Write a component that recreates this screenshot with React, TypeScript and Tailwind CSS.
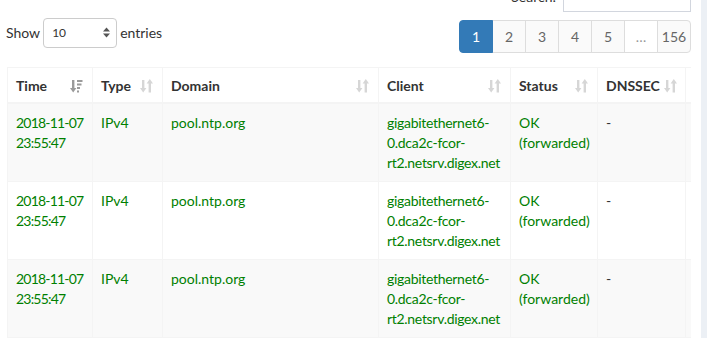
import { ReactNode } from 'react'

type Row = {
  date: string
  time: string
  type: string
  domain: string
  client: string[]
  status: string[]
  dnssec: string
}

const rows: Row[] = [1, 2, 3].map(() => ({
  date: '2018-11-07',
  time: '23:55:47',
  type: 'IPv4',
  domain: 'pool.ntp.org',
  client: ['gigabitethernet6-', '0.dca2c-fcor-', 'rt2.netsrv.digex.net'],
  status: ['OK', '(forwarded)'],
  dnssec: '-',
}))

const pages = ['1', '2', '3', '4', '5', '…', '156']

function SortBoth() {
  return (
    <svg width="13" height="14" viewBox="0 0 13 14" className="shrink-0">
      <g fill="#d6d6d6">
        <rect x="2" y="1" width="2.4" height="9" />
        <polygon points="0,9 6.4,9 3.2,13.5" />
        <rect x="8.6" y="4" width="2.4" height="9.5" />
        <polygon points="6.6,4.5 13,4.5 9.8,0" />
      </g>
    </svg>
  )
}

function SortDesc() {
  return (
    <svg width="13" height="14" viewBox="0 0 13 14" className="shrink-0">
      <g fill="#9a9a9a">
        <rect x="2" y="1" width="2.4" height="9" />
        <polygon points="0,9 6.4,9 3.2,13.5" />
        <rect x="7" y="1" width="5.5" height="2" />
        <rect x="7" y="4.5" width="4.5" height="2" />
        <rect x="7" y="8" width="3" height="2" />
        <rect x="7" y="11.5" width="2" height="2" />
      </g>
    </svg>
  )
}

function Th({ children, active, bare }: { children?: ReactNode; active?: boolean; bare?: boolean }) {
  return (
    <th className="border border-[#f4f4f4] border-b-2 pl-2 pr-[9px] pt-2 pb-[6px] text-left align-bottom font-bold text-[#333]">
      <div className="flex h-[20px] items-center justify-between gap-1 whitespace-nowrap">
        <span>{children}</span>
        {bare ? null : active ? <SortDesc /> : <SortBoth />}
      </div>
    </th>
  )
}

function Td({ children, dark }: { children?: ReactNode; dark?: boolean }) {
  return (
    <td
      className={`border border-[#f4f4f4] px-2 pt-[9px] pb-2 align-top whitespace-nowrap ${
        dark ? 'text-[#333]' : 'text-[#008000]'
      }`}
    >
      {children}
    </td>
  )
}

function App() {
  return (
    <div
      className="flex h-[338px] w-[707px] overflow-hidden bg-white text-[14px] leading-[20px] text-[#333]"
      style={{ fontFamily: 'Lato, "Source Sans Pro", "Open Sans", sans-serif' }}
    >
      <div className="flex w-[701px] flex-col pl-[7px] pr-[10px]">
        {/* search row, mostly scrolled out of view */}
        <div className="-mt-[18px] flex h-[30px] items-center justify-end gap-[7px]">
          <span>Search:</span>
          <div className="h-[30px] w-[128px] border border-[#d2d6de] bg-white" />
        </div>

        <div className="mt-[6px] flex h-[35px] items-start justify-between">
          <div className="flex h-[29px] items-center -ml-[1px]">
            <span>Show</span>
            <div className="ml-[3px] mr-[3px] flex h-[30px] w-[74px] items-center justify-between rounded-[4px] border border-[#ccc] bg-white pl-[8px] pr-[6px] text-[12px]">
              <span>10</span>
              <svg width="7" height="11" viewBox="0 0 7 11">
                <polygon points="0,4.5 7,4.5 3.5,0.5" fill="#555" />
                <polygon points="0,6.5 7,6.5 3.5,10.5" fill="#555" />
              </svg>
            </div>
            <span>entries</span>
          </div>

          <div className="mt-[2px] flex h-[33px]">
            {pages.map((p, i) => (
              <div
                key={p}
                className={`flex h-[33px] items-center justify-center border text-[14px] ${
                  i === 0 ? 'w-[34px] rounded-l-[4px]' : '-ml-px w-[34px]'
                } ${i === pages.length - 1 ? 'rounded-r-[4px]' : ''} ${
                  i === 0
                    ? 'z-10 border-[#337ab7] bg-[#337ab7] text-white'
                    : p === '…'
                      ? 'border-[#ddd] bg-white text-[#999]'
                      : 'border-[#ddd] bg-[#fafafa] text-[#666]'
                }`}
              >
                {p}
              </div>
            ))}
          </div>
        </div>

        <div className="mt-[14px] w-[684px] overflow-hidden">
          <table className="w-[760px] table-fixed border-collapse">
            <colgroup>
              <col className="w-[85px]" />
              <col className="w-[70px]" />
              <col className="w-[216px]" />
              <col className="w-[132px]" />
              <col className="w-[87px]" />
              <col className="w-[88px]" />
              <col className="w-[82px]" />
            </colgroup>
            <thead>
              <tr>
                <Th active>Time</Th>
                <Th>Type</Th>
                <Th>Domain</Th>
                <Th>Client</Th>
                <Th>Status</Th>
                <Th>DNSSEC</Th>
                <Th bare />
              </tr>
            </thead>
            <tbody>
              {rows.map((r, i) => (
                <tr key={i} className={i % 2 === 0 ? 'bg-[#f9f9f9]' : 'bg-white'}>
                  <Td>
                    <div className="tracking-[-0.8px]">
                      {r.date}
                      <br />
                      {r.time}
                    </div>
                  </Td>
                  <Td>{r.type}</Td>
                  <Td>{r.domain}</Td>
                  <Td>
                    <div className="tracking-[-0.3px]">
                      {r.client.map((c) => (
                        <div key={c}>{c}</div>
                      ))}
                    </div>
                  </Td>
                  <Td>
                    {r.status.map((s) => (
                      <div key={s}>{s}</div>
                    ))}
                  </Td>
                  <Td dark>{r.dnssec}</Td>
                  <Td />
                </tr>
              ))}
            </tbody>
          </table>
        </div>
      </div>
      <div className="w-[6px] bg-[#ecf0f5]" />
    </div>
  )
}

export default App
